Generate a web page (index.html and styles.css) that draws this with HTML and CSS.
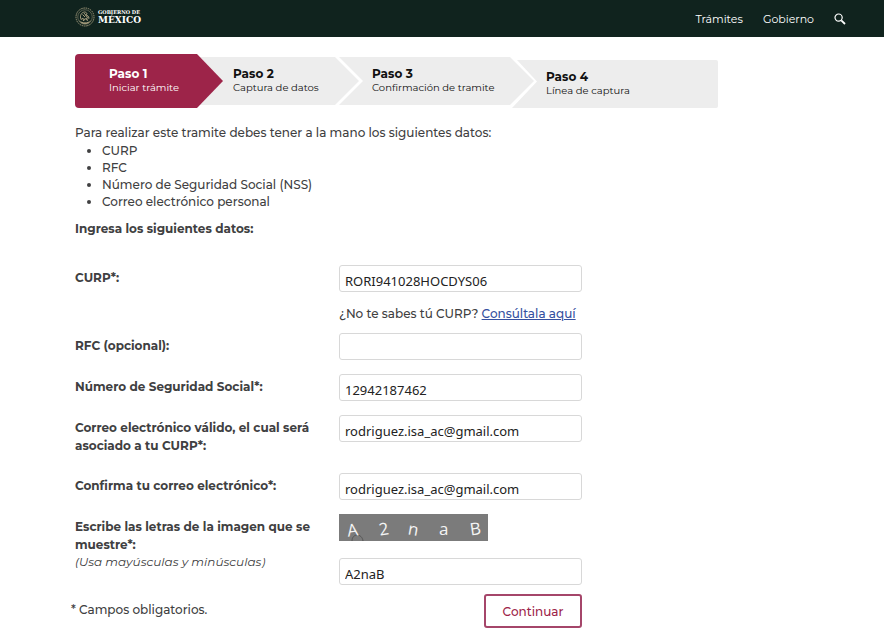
FILE: index.html
```
<!DOCTYPE html>
<html lang="es">
<head>
  <meta charset="UTF-8">
  <meta name="viewport" content="width=device-width, initial-scale=1">
  <title>Iniciar trámite</title>
  <link rel="stylesheet" href="styles.css">
</head>
<body>

  <header class="topbar">
    <a class="logo" href="#">
      <svg class="sello" viewBox="0 0 40 40" width="20" height="20" fill="none" stroke="#a39b7c" aria-hidden="true">
        <circle cx="20" cy="20" r="18" stroke-width="2" stroke-dasharray="3 1.5"/>
        <circle cx="20" cy="20" r="14.5" stroke-width="1"/>
        <path d="M12 25c-3-7 0-14 7-15 3 0 5 2 5 4l-3 2c4 0 7 3 7 7-2-2-4-2-5-1l2 5-5-4-3 5-1-6-4 3z" stroke-width="2"/>
        <path d="M15 15l5 5M18 12l7 9M9 28c5 5 17 5 22 0M12 31c4 3 12 3 16 0" stroke-width="2"/>
      </svg>
      <span class="logo-texto"><small>GOBIERNO DE</small><b>MÉXICO</b></span>
    </a>
    <nav class="menu">
      <a href="#">Trámites</a>
      <a href="#">Gobierno</a>
      <a href="#" aria-label="Buscar">
        <svg class="lupa" viewBox="0 0 12 12" width="12" height="12" fill="none" stroke="#fff" aria-hidden="true">
          <circle cx="4.6" cy="4.6" r="3.6" stroke-width="1.2"/>
          <path d="M7.3 7.3l3.7 3.7" stroke-width="1.8"/>
        </svg>
      </a>
    </nav>
  </header>

  <main class="contenido">
    <ol class="pasos">
      <li class="paso activo"><b>Paso 1</b><span>Iniciar trámite</span></li>
      <li class="paso segundo"><b>Paso 2</b><span>Captura de datos</span></li>
      <li class="paso tercero"><b>Paso 3</b><span>Confirmación de tramite</span></li>
      <li class="paso ultimo"><b>Paso 4</b><span>Línea de captura</span></li>
    </ol>

    <p class="intro">Para realizar este tramite debes tener a la mano los siguientes datos:</p>
    <ul class="requisitos">
      <li>CURP</li>
      <li>RFC</li>
      <li>Número de Seguridad Social (NSS)</li>
      <li>Correo electrónico personal</li>
    </ul>
    <h1 class="titulo">Ingresa los siguientes datos:</h1>

    <form class="formulario">
      <label for="curp">CURP*:</label>
      <div class="campo">
        <input type="text" id="curp" value="RORI941028HOCDYS06">
        <p class="ayuda">¿No te sabes tú CURP? <a href="#">Consúltala aquí</a></p>
      </div>

      <label for="rfc">RFC (opcional):</label>
      <div class="campo"><input type="text" id="rfc"></div>

      <label for="nss">Número de Seguridad Social*:</label>
      <div class="campo"><input type="text" id="nss" value="12942187462"></div>

      <label for="correo">Correo electrónico válido, el cual será asociado a tu CURP*:</label>
      <div class="campo"><input type="email" id="correo" value="rodriguez.isa_ac@gmail.com"></div>

      <label for="confirma">Confirma tu correo electrónico*:</label>
      <div class="campo"><input type="email" id="confirma" value="rodriguez.isa_ac@gmail.com"></div>

      <label for="letras">Escribe las letras de la imagen que se muestre*: <em>(Usa mayúsculas y minúsculas)</em></label>
      <div class="campo">
        <svg class="captcha" viewBox="0 0 149 27" width="149" height="27">
          <path d="M13 27c0-8 10-8 11 0" fill="none" stroke="#555"/>
          <text x="8" y="22" transform="rotate(-8 13 16)">A</text>
          <text x="40" y="21" transform="rotate(-10 45 16)">2</text>
          <text x="69" y="21" transform="rotate(10 73 16)">n</text>
          <text x="100" y="21">a</text>
          <text x="131" y="21" transform="rotate(-8 135 16)">B</text>
        </svg>
        <input type="text" id="letras" value="A2naB">
      </div>

      <p class="nota">* Campos obligatorios.</p>
      <button class="continuar" type="button">Continuar</button>
    </form>
  </main>

</body>
</html>
```
FILE: styles.css
```
* { box-sizing: border-box; }
body { margin: 0; background: #fff; color: #404041; font: 500 12px/18px Montserrat, Inter, sans-serif; }
p, h1, ul, ol { margin: 0; padding: 0; }

.topbar { display: flex; justify-content: space-between; align-items: center; height: 37px; padding: 0 38px 0 75px; background: #10231e; }
.logo { display: flex; align-items: center; gap: 3px; color: #fff; text-decoration: none; padding-bottom: 4px; }
.logo-texto { display: flex; flex-direction: column; font-family: "DejaVu Serif", serif; }
.logo-texto small { font-size: 5px; line-height: 7px; font-weight: bold; }
.logo-texto b { font-size: 9px; line-height: 9px; }
.menu { display: flex; align-items: center; gap: 20px; }
.menu a { color: #fff; text-decoration: none; font-size: 11px; font-weight: 400; }
.lupa { display: block; }

.contenido { max-width: 718px; margin-left: 75px; padding-top: 17px; }

.pasos { display: flex; align-items: center; list-style: none; max-width: 643px; height: 54px; }
.paso { height: 48px; padding: 9px 0 0 34px; background: #ededed; color: #111; white-space: nowrap; }
.paso b, .paso span { display: block; line-height: 15px; }
.paso b { font-size: 12px; }
.paso span { font-size: 10px; line-height: 14px; font-weight: 400; }
.activo { position: relative; z-index: 1; flex: 0 1 148px; height: 54px; padding-top: 12px; background: #9d2449; color: #fff; border-radius: 4px 0 0 4px; clip-path: polygon(0 0, calc(100% - 26px) 0, 100% 50%, calc(100% - 26px) 100%, 0 100%); }
.segundo { flex: 0 1 162px; margin-left: -25px; padding-left: 35px; clip-path: polygon(0 0, calc(100% - 25px) 0, calc(100% - 1px) 50%, calc(100% - 25px) 100%, 0 100%); }
.tercero { flex: 0 1 196px; margin-left: -22px; clip-path: polygon(1px 0, calc(100% - 24px) 0, 100% 50%, calc(100% - 24px) 100%, 1px 100%, 25px 50%); }
.ultimo { flex: 0 1 206px; margin-left: -22px; align-self: flex-end; border-radius: 0 2px 2px 0; clip-path: polygon(5px 0, 100% 0, 100% 100%, 0 100%, 25px 45%); }

.intro { margin-top: 16px; }
.requisitos { padding-left: 27px; }
.requisitos li { line-height: 17px; }
.titulo { margin-top: 10px; font-size: 12px; line-height: 18px; font-weight: 700; }

.formulario { display: grid; grid-template-columns: 264px 243px; row-gap: 14px; margin-top: 27px; }
.formulario label { padding: 4px 20px 4px 0; font-weight: 700; }
.formulario em { display: block; font-weight: 400; line-height: 16px; }
.campo input { display: block; width: 100%; height: 27px; padding: 5px 5px 0; border: 1px solid #d8d8d8; border-radius: 3px; background: #fff; color: #222; font: 13px "Noto Sans", sans-serif; }
.ayuda { padding-top: 13px; margin-bottom: -4px; white-space: nowrap; }
.ayuda a { color: #3550a0; }
.captcha { display: block; margin-bottom: 17px; background: #7b7b7b; }
.captcha text { fill: #f4f4f4; font: 500 17px "Open Sans", sans-serif; }
.nota { margin-left: -4px; padding-top: 2px; }
.continuar { justify-self: end; width: 98px; height: 34px; margin-top: -5px; border: 2px solid #a5466a; border-radius: 3px; background: #fff; color: #9d2449; font: 500 12px Montserrat, Inter, sans-serif; }
```
